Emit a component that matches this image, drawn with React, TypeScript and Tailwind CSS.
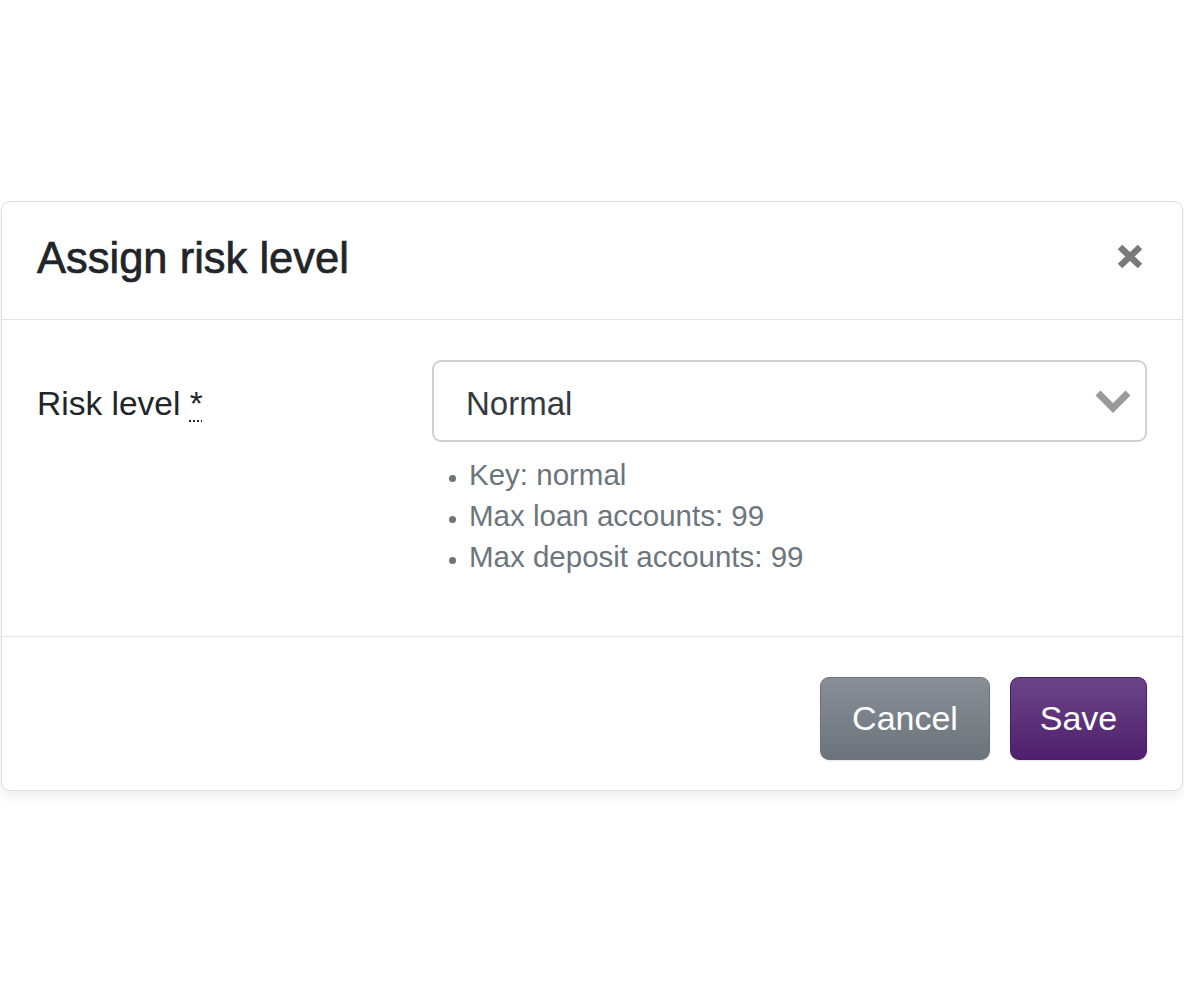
import React from "react";

const font = { fontFamily: '"Liberation Sans", Arial, sans-serif' };

const CloseIcon = () => (
  <svg width="28" height="27" viewBox="0 0 28 27" className="block">
    <path d="M4 4 L24 23 M24 4 L4 23" stroke="#7a7a7a" strokeWidth="6.5" strokeLinecap="butt" />
  </svg>
);

const Chevron = () => (
  <svg width="36" height="26" viewBox="0 0 36 26" className="block">
    <polyline points="3,5 18,20 33,5" fill="none" stroke="#9a9a9a" strokeWidth="7" />
  </svg>
);

const helpItems = ["Key: normal", "Max loan accounts: 99", "Max deposit accounts: 99"];

export default function App() {
  return (
    <div className="min-h-screen bg-white pt-[201px] px-[1px]" style={font}>
      <div className="bg-white border border-[#dcdfe3] rounded-[9px] shadow-[0_5px_12px_rgba(0,0,0,0.08)]">
        {/* header */}
        <div className="flex items-start justify-between border-b border-[#e1e4e8] pl-[35px] pr-[38px] pt-[30px] pb-[35px]">
          <h5 className="text-[43.5px] leading-[1.2] font-medium text-[#212529] [-webkit-text-stroke:0.7px_#212529]">
            Assign risk level
          </h5>
          <button className="mt-[11px]">
            <CloseIcon />
          </button>
        </div>

        {/* body */}
        <div className="px-[35px] pt-[40px] pb-[59px] border-b border-[#e1e4e8]">
          <div className="flex">
            <label className="w-[395px] h-[82px] flex items-center pt-[5px] text-[33.5px] text-[#212529]">
              Risk level&nbsp;
              <abbr title="required" className="no-underline">
                <span className="underline decoration-dotted decoration-[2px] underline-offset-[6px]">*</span>
              </abbr>
            </label>
            <div className="flex-1">
              <div className="h-[82px] border-2 border-[#d0d0d0] rounded-[9px] flex items-center justify-between pl-[32px] pr-[14px]">
                <span className="text-[33px] text-[#343a40] pt-[5px]">Normal</span>
                <Chevron />
              </div>
              <ul className="mt-[12px] list-disc pl-[37px] text-[29.5px] leading-[41px] text-[#6c757d] marker:text-[22px]">
                {helpItems.map((item) => (
                  <li key={item}>{item}</li>
                ))}
              </ul>
            </div>
          </div>
        </div>

        {/* footer */}
        <div className="flex justify-end gap-[20px] pt-[40px] pb-[30px] pr-[35px]">
          <button className="w-[170px] h-[83px] rounded-[9px] border border-[#6c737a] bg-gradient-to-b from-[#888f96] to-[#6c747b] text-white text-[34px] shadow-[0_1px_2px_rgba(0,0,0,0.1)]">
            Cancel
          </button>
          <button className="w-[137px] h-[83px] rounded-[9px] border border-[#4a1d68] bg-gradient-to-b from-[#6b4587] to-[#4f1f6d] text-white text-[34px] shadow-[0_1px_2px_rgba(0,0,0,0.1)]">
            Save
          </button>
        </div>
      </div>
    </div>
  );
}
